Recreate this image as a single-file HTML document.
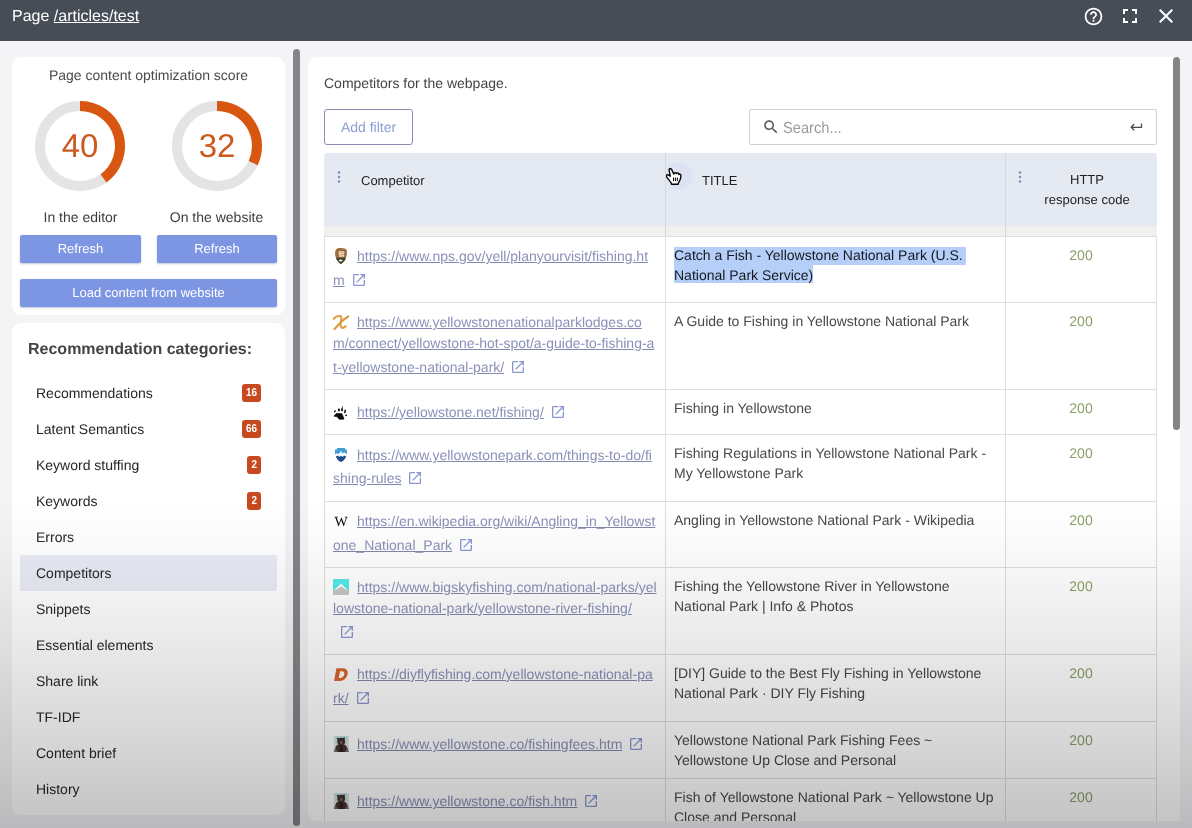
<!DOCTYPE html>
<html>
<head>
<meta charset="utf-8">
<title>Page /articles/test</title>
<style>
*{box-sizing:border-box;margin:0;padding:0}
html,body{width:1192px;height:828px;overflow:hidden}
body{position:relative;background:#f4f4f6;font-family:"Liberation Sans",sans-serif;font-size:14px;color:#333;-webkit-font-smoothing:antialiased}
#wrap{position:absolute;left:0;top:0;width:1192px;height:828px;overflow:hidden;will-change:transform;text-rendering:geometricPrecision}
.abs{position:absolute}
#hdr{position:absolute;left:0;top:0;width:1192px;height:41px;background:#474d57}
#hdr .ttl{position:absolute;left:12px;top:7px;font-size:16px;line-height:20px;color:#fff;white-space:nowrap}
#hdr .ttl u{text-decoration:underline;text-underline-offset:1px}
#hdr svg{position:absolute}
.card{position:absolute;background:#fff;border-radius:9px}
.sb{position:absolute;background:#858588;border-radius:4px}
/* left card 1 */
.c1t{position:absolute;left:0;width:273px;top:9px;text-align:center;font-size:14px;line-height:18px;color:#4a4a4a}
.lbl{position:absolute;width:137px;text-align:center;font-size:14px;line-height:18px;color:#3c3c3c}
.btn{position:absolute;background:#7d96e3;color:#fff;font-size:13px;text-align:center;border-radius:2px;box-shadow:0 1px 2px rgba(80,90,140,.35)}
.num{position:absolute;width:90px;text-align:center;font-size:33px;line-height:36px;color:#cc5a20}
/* left card 2 */
.rc{position:absolute;left:16px;top:17px;font-weight:bold;font-size:16px;line-height:20px;color:#444;white-space:nowrap}
.it{position:absolute;left:8px;width:257px;height:36px;line-height:36px;padding-left:16px;font-size:14px;color:#262626;white-space:nowrap}
.it.sel{background:#e9ebf5;border-radius:2px}
.bd{position:absolute;height:18px;border-radius:3px;background:#c8491f;color:#fff;font-weight:bold;font-size:11.5px;line-height:18px;text-align:center}
.bd span{display:inline-block;transform:scaleX(.86);transform-origin:50% 50%}
/* main */
#main .cap{position:absolute;left:16px;top:17px;font-size:14px;line-height:18px;color:#444;white-space:nowrap}
#addf{position:absolute;left:16px;top:52px;width:89px;height:36px;border:1px solid #8a8cb4;border-radius:3px;color:#8c9cd4;font-size:14px;line-height:34px;text-align:center}
#srch{position:absolute;left:441px;top:52px;width:408px;height:36px;border:1px solid #d2d2d2;border-radius:2px;background:#fff}
#srch .ph{position:absolute;left:33px;top:9px;font-size:16px;line-height:20px;color:#9c9c9c;white-space:nowrap;transform:scaleX(.915);transform-origin:0 50%}
#tbl{position:absolute;left:16px;top:96px;width:833px;height:680px;overflow:hidden}
#th{position:absolute;left:0;top:0;width:833px;height:73px;background:#e5e9f2;border-radius:3px 3px 0 0}
#strip{position:absolute;left:0;top:73px;width:833px;height:11px;background:#f0f0ef}
.hx{position:absolute;font-size:13px;line-height:20px;color:#222;white-space:nowrap}
.vl{position:absolute;top:0;width:1px;background:#dedede}
.row{position:absolute;left:0;width:833px;border-top:1px solid #dedede}
.lk{position:absolute;left:9px;top:9px;width:330px;font-size:14px;line-height:21px;color:#8b91b9;white-space:nowrap}
.lk u{text-decoration:underline;text-decoration-color:#8388ad;text-underline-offset:1px}
.fv{display:inline-block;width:16px;height:16px;margin-right:8px;vertical-align:-3px}
.oi{display:inline-block;width:16px;height:28px;margin-left:6px;vertical-align:middle}
.oi svg{display:block;margin-top:5px}
.tt{position:absolute;left:350px;top:8px;font-size:14px;line-height:20px;color:#484848;white-space:nowrap}
.cd{position:absolute;left:682px;width:150px;top:8px;text-align:center;font-size:14px;line-height:20px;color:#8c9f66}
.hl{position:relative;color:#15181f}
.hb{position:absolute;background:#b5cff8}
#ovl{position:absolute;left:0;top:495px;width:1192px;height:333px;background:linear-gradient(to bottom,rgba(0,0,0,0.0000) 0%,rgba(0,0,0,0.0132) 10%,rgba(0,0,0,0.0314) 20%,rgba(0,0,0,0.0522) 30%,rgba(0,0,0,0.0748) 40%,rgba(0,0,0,0.0988) 50%,rgba(0,0,0,0.1241) 60%,rgba(0,0,0,0.1505) 70%,rgba(0,0,0,0.1778) 80%,rgba(0,0,0,0.2060) 90%,rgba(0,0,0,0.2350) 100%);pointer-events:none}
</style>
</head>
<body>
<div id="wrap">
<div id="hdr">
  <div class="ttl">Page <u>/articles/test</u></div>
  <svg style="left:1083px;top:6px" width="21" height="21" viewBox="0 0 24 24"><path fill="#fff" d="M11 18h2v-2h-2v2zm1-16C6.48 2 2 6.48 2 12s4.48 10 10 10 10-4.48 10-10S17.52 2 12 2zm0 18c-4.41 0-8-3.59-8-8s3.59-8 8-8 8 3.59 8 8-3.59 8-8 8zm0-14c-2.21 0-4 1.79-4 4h2c0-1.1.9-2 2-2s2 .9 2 2c0 2-3 1.75-3 5h2c0-2.250 3-2.500 3-5 0-2.210-1.790-4-4-4z"/></svg>
  <svg style="left:1118px;top:4px" width="24" height="24" viewBox="0 0 24 24"><path fill="#fff" d="M7 14H5v5h5v-2H7v-3zm-2-4h2V7h3V5H5v5zm12 7h-3v2h5v-5h-2v3zM14 5v2h3v3h2V5h-5z"/></svg>
  <svg style="left:1154px;top:4px" width="24" height="24" viewBox="0 0 24 24"><path fill="#fff" d="M19 6.410L17.590 5 12 10.590 6.410 5 5 6.410 10.590 12 5 17.590 6.410 19 12 13.410 17.590 19 19 17.590 13.410 12z"/></svg>
</div>

<!-- left column -->
<div class="card" id="c1" style="left:12px;top:57px;width:273px;height:258px">
  <div class="c1t">Page content optimization score</div>
  <div class="abs" style="left:23px;top:44px"><svg width="90" height="90" viewBox="0 0 90 90"><circle cx="45" cy="45" r="40" fill="none" stroke="#e4e4e4" stroke-width="10"/><path d="M45 5 A40 40 0 0 1 68.51 77.36" fill="none" stroke="#d8560f" stroke-width="10"/></svg></div>
  <div class="abs" style="left:160px;top:44px"><svg width="90" height="90" viewBox="0 0 90 90"><circle cx="45" cy="45" r="40" fill="none" stroke="#e4e4e4" stroke-width="10"/><path d="M45 5 A40 40 0 0 1 81.19 62.03" fill="none" stroke="#d8560f" stroke-width="10"/></svg></div>
  <div class="num" style="left:23px;top:71px">40</div>
  <div class="num" style="left:160px;top:71px">32</div>
  <div class="lbl" style="left:0;top:151px">In the editor</div>
  <div class="lbl" style="left:136px;top:151px">On the website</div>
  <div class="btn" style="left:8px;top:178px;width:121px;height:28px;line-height:27px">Refresh</div>
  <div class="btn" style="left:145px;top:178px;width:120px;height:28px;line-height:27px">Refresh</div>
  <div class="btn" style="left:8px;top:222px;width:257px;height:28px;line-height:28px">Load content from website</div>
</div>
<div class="card" id="c2" style="left:12px;top:323px;width:273px;height:492px">
  <div class="rc">Recommendation categories:</div>
  <div class="it" style="top:52px">Recommendations</div>
  <div class="bd" style="left:230px;top:61px;width:19px"><span>16</span></div>
  <div class="it" style="top:88px">Latent Semantics</div>
  <div class="bd" style="left:230px;top:97px;width:19px"><span>66</span></div>
  <div class="it" style="top:124px">Keyword stuffing</div>
  <div class="bd" style="left:235px;top:133px;width:14px"><span>2</span></div>
  <div class="it" style="top:160px">Keywords</div>
  <div class="bd" style="left:235px;top:169px;width:14px"><span>2</span></div>
  <div class="it" style="top:196px">Errors</div>
  <div class="it sel" style="top:232px">Competitors</div>
  <div class="it" style="top:268px">Snippets</div>
  <div class="it" style="top:304px">Essential elements</div>
  <div class="it" style="top:340px">Share link</div>
  <div class="it" style="top:376px">TF-IDF</div>
  <div class="it" style="top:412px">Content brief</div>
  <div class="it" style="top:448px">History</div>
</div>
<div class="sb" style="left:293px;top:49px;width:7px;height:777px"></div>

<!-- main -->
<div class="card" id="main" style="left:308px;top:57px;width:872px;height:764px;border-radius:9px 0 0 9px;overflow:hidden">
  <div class="cap">Competitors for the webpage.</div>
  <div id="addf">Add filter</div>
  <div id="srch">
    <svg class="abs" style="left:12px;top:8px" width="18" height="18" viewBox="0 0 24 24"><path fill="#555" d="M15.5 14h-.79l-.28-.27C15.41 12.59 16 11.110 16 9.500 16 5.910 13.090 3 9.500 3S3 5.910 3 9.500 5.910 16 9.500 16c1.610 0 3.090-.59 4.230-1.570l.27.28v.79l5 4.990L20.490 19l-4.990-5zm-6 0C7.010 14 5 11.990 5 9.500S7.010 5 9.500 5 14 7.010 14 9.500 11.990 14 9.500 14z"/></svg>
    <div class="ph">Search...</div>
    <svg class="abs" style="left:379px;top:11px" width="14" height="12" viewBox="0 0 14 12"><path d="M12.500 2.600V6.300H2.200M5.200 3.300L2.200 6.300L5.200 9.300" fill="none" stroke="#4a4a4a" stroke-width="1.300"/></svg>
  </div>
  <div id="tbl">
    <div id="th"></div>
    <div id="strip"></div>
    <div class="abs" style="left:341px;top:9px;width:28px;height:28px;border-radius:14px;background:#dde3f2"></div>
    <div class="abs" style="left:13px;top:16.500px"><svg width="4" height="12" viewBox="0 0 4 12"><circle cx="2" cy="1.6" r="1.25" fill="#7f89bc"/><circle cx="2" cy="6" r="1.25" fill="#7f89bc"/><circle cx="2" cy="10.4" r="1.25" fill="#7f89bc"/></svg></div>
    <div class="hx" style="left:37px;top:18px">Competitor</div>
    <div class="hx" style="left:378px;top:18px">TITLE</div>
    <div class="abs" style="left:694px;top:16.500px"><svg width="4" height="12" viewBox="0 0 4 12"><circle cx="2" cy="1.6" r="1.25" fill="#7f89bc"/><circle cx="2" cy="6" r="1.25" fill="#7f89bc"/><circle cx="2" cy="10.4" r="1.25" fill="#7f89bc"/></svg></div>
    <div class="hx" style="left:688px;width:150px;top:17px;text-align:center">HTTP<br>response code</div>
    <div class="vl" style="left:341px;height:84px;background:#d3d7e0"></div>
    <div class="vl" style="left:681px;height:84px;background:#d3d7e0"></div>
    <div class="row" style="top:83px;height:66px"><div class="lk"><svg class="fv" viewBox="0 0 16 16"><path d="M4.200 0.500C6 -0.100 10 -0.100 12.400 0.700C14.200 1.500 14.200 4.800 13.600 7.800C13 11.200 10.400 14.400 7.900 15.900C5.500 14.400 2.900 11.200 2.300 7.800C1.800 4.800 2.200 1.300 4.200 0.500Z" fill="#a26d3c"/><path d="M3.100 10.200C5 9.700 11 9.700 12.900 10.200C12 12.600 10 14.700 7.900 15.900C5.800 14.700 4 12.600 3.100 10.200Z" fill="#39432f"/><path d="M6 3.300h4.800l.8 1.700-1.200.7.900 1.500-.5 1.600H5.900l.5-1.700-.9-.9z" fill="#ecdcc8"/><path d="M7.400 4.600h2.800M6.800 6.600h4" stroke="#b98d62" stroke-width=".7"/><ellipse cx="7.700" cy="12.600" rx="1.900" ry="1" fill="#f3f3ea"/></svg><u>https://www.nps.gov/yell/planyourvisit/fishing.ht</u><br><u>m</u><span class="oi"><svg width="16" height="16" viewBox="0 0 24 24"><path fill="#8a98d2" d="M19 19H5V5h7V3H5c-1.11 0-2 .9-2 2v14c0 1.1.89 2 2 2h14c1.1 0 2-.9 2-2v-7h-2v7zM14 3v2h3.59l-9.83 9.83 1.41 1.41L19 6.41V10h2V3h-7z"/></svg></span></div><div class="tt"><i class="hb" style="left:0;top:2px;width:292px;height:18px"></i><i class="hb" style="left:0;top:20px;width:139px;height:18px"></i><span class="hl">Catch a Fish - Yellowstone National Park (U.S.<br>National Park Service)</span></div><div class="cd">200</div></div>
    <div class="row" style="top:149px;height:87px"><div class="lk"><svg class="fv" viewBox="0 0 16 16"><path d="M0.500 4.800C2 3 5 1.900 7 2C8.700 2.100 8.700 3.600 8.100 6.500C7.500 9.500 7 12 8.200 13.200C9.400 14.200 11.300 13.500 12.500 12.200" fill="none" stroke="#e19a3c" stroke-width="2.100" stroke-linecap="round"/><path d="M15.600 2.200C11 5 5 11 1.600 15" fill="none" stroke="#dc9a44" stroke-width="2" stroke-linecap="round"/></svg><u>https://www.yellowstonenationalparklodges.co</u><br><u>m/connect/yellowstone-hot-spot/a-guide-to-fishing-a</u><br><u>t-yellowstone-national-park/</u><span class="oi"><svg width="16" height="16" viewBox="0 0 24 24"><path fill="#8a98d2" d="M19 19H5V5h7V3H5c-1.11 0-2 .9-2 2v14c0 1.1.89 2 2 2h14c1.1 0 2-.9 2-2v-7h-2v7zM14 3v2h3.59l-9.83 9.83 1.41 1.41L19 6.41V10h2V3h-7z"/></svg></span></div><div class="tt">A Guide to Fishing in Yellowstone National Park</div><div class="cd">200</div></div>
    <div class="row" style="top:236px;height:45px"><div class="lk"><svg class="fv" viewBox="0 0 16 16"><path d="M1.200 11.700L3.300 9.500H8.800L10.900 14.200L10.600 15.300H6.200L4.100 12.800L1.200 12.300Z" fill="#0a0a0a" stroke="#0a0a0a" stroke-width=".6" stroke-linejoin="round"/><ellipse cx="1.900" cy="7.300" rx=".8" ry="1.100" fill="#0a0a0a" transform="rotate(25 1.900 7.300)"/><rect x="5" y="4.600" width="1.800" height="2.700" rx=".6" fill="#0a0a0a"/><rect x="8.100" y="4.200" width="1.800" height="3" rx=".6" fill="#0a0a0a"/><path d="M9.300 4.600L9.500 2.400" stroke="#0a0a0a" stroke-width=".7"/><rect x="11.300" y="5.600" width="1.500" height="3.600" rx=".6" fill="#0a0a0a" transform="rotate(12 12 7.400)"/><ellipse cx="13.100" cy="11.300" rx=".9" ry=".9" fill="#0a0a0a"/></svg><u>https://yellowstone.net/fishing/</u><span class="oi"><svg width="16" height="16" viewBox="0 0 24 24"><path fill="#8a98d2" d="M19 19H5V5h7V3H5c-1.11 0-2 .9-2 2v14c0 1.1.89 2 2 2h14c1.1 0 2-.9 2-2v-7h-2v7zM14 3v2h3.59l-9.83 9.83 1.41 1.41L19 6.41V10h2V3h-7z"/></svg></span></div><div class="tt">Fishing in Yellowstone</div><div class="cd">200</div></div>
    <div class="row" style="top:281px;height:67px"><div class="lk" style="top:10px"><svg class="fv" viewBox="0 0 16 16"><path d="M4 1H12V2.500H14V7.300L11.200 5.200L9.600 6.700L8 4L5.600 7.200L4.600 6.200L2 7.300V2.500H4Z" fill="#3f9fd6"/><path d="M2.800 9.400L5 8.400L6.500 9.900L8 8.400L9.500 9.900L11 8.400L13.200 9.400C12.200 12 10.200 14 8 15C5.800 14 3.800 12 2.800 9.400Z" fill="#1d4d89"/></svg><u>https://www.yellowstonepark.com/things-to-do/fi</u><br><u>shing-rules</u><span class="oi" style="height:26px"><svg style="margin-top:4px" width="16" height="16" viewBox="0 0 24 24"><path fill="#8a98d2" d="M19 19H5V5h7V3H5c-1.11 0-2 .9-2 2v14c0 1.1.89 2 2 2h14c1.1 0 2-.9 2-2v-7h-2v7zM14 3v2h3.59l-9.83 9.83 1.41 1.41L19 6.41V10h2V3h-7z"/></svg></span></div><div class="tt">Fishing Regulations in Yellowstone National Park -<br>My Yellowstone Park</div><div class="cd">200</div></div>
    <div class="row" style="top:348px;height:66px"><div class="lk"><svg class="fv" viewBox="0 0 16 16"><text x="8" y="13" font-family="Liberation Serif,serif" font-size="14" text-anchor="middle" fill="#0c0c0c">W</text></svg><u>https://en.wikipedia.org/wiki/Angling_in_Yellowst</u><br><u>one_National_Park</u><span class="oi"><svg width="16" height="16" viewBox="0 0 24 24"><path fill="#8a98d2" d="M19 19H5V5h7V3H5c-1.11 0-2 .9-2 2v14c0 1.1.89 2 2 2h14c1.1 0 2-.9 2-2v-7h-2v7zM14 3v2h3.59l-9.83 9.83 1.41 1.41L19 6.41V10h2V3h-7z"/></svg></span></div><div class="tt">Angling in Yellowstone National Park - Wikipedia</div><div class="cd">200</div></div>
    <div class="row" style="top:414px;height:87px"><div class="lk"><svg class="fv" viewBox="0 0 16 16"><rect width="16" height="16" fill="#52ebe8"/><path d="M0.500 12L8 4.400L15.500 12Z" fill="#fff"/><path d="M0 11.200L3 10.700L8 7.400L13 10.700L16 11.200V16H0Z" fill="#c9c5c5"/></svg><u>https://www.bigskyfishing.com/national-parks/yel</u><br><u>lowstone-national-park/yellowstone-river-fishing/</u><br><span class="oi"><svg width="16" height="16" viewBox="0 0 24 24"><path fill="#8a98d2" d="M19 19H5V5h7V3H5c-1.11 0-2 .9-2 2v14c0 1.1.89 2 2 2h14c1.1 0 2-.9 2-2v-7h-2v7zM14 3v2h3.59l-9.83 9.83 1.41 1.41L19 6.41V10h2V3h-7z"/></svg></span></div><div class="tt">Fishing the Yellowstone River in Yellowstone<br>National Park | Info &amp; Photos</div><div class="cd">200</div></div>
    <div class="row" style="top:501px;height:67px"><div class="lk"><svg class="fv" viewBox="0 0 16 16"><path d="M3.400 2.300H9.600C13.400 2.300 15.400 4.800 14.600 8.300C13.800 12 10.800 15 6.800 15H1.100ZM7.200 5.300L5.600 12H7C9.200 12 10.700 10.600 11.200 8.500C11.700 6.500 10.800 5.300 8.800 5.300Z" fill="#d8672c"/></svg><u>https://diyflyfishing.com/yellowstone-national-pa</u><br><u>rk/</u><span class="oi"><svg width="16" height="16" viewBox="0 0 24 24"><path fill="#8a98d2" d="M19 19H5V5h7V3H5c-1.11 0-2 .9-2 2v14c0 1.1.89 2 2 2h14c1.1 0 2-.9 2-2v-7h-2v7zM14 3v2h3.59l-9.83 9.83 1.41 1.41L19 6.41V10h2V3h-7z"/></svg></span></div><div class="tt">[DIY] Guide to the Best Fly Fishing in Yellowstone<br>National Park &middot; DIY Fly Fishing</div><div class="cd">200</div></div>
    <div class="row" style="top:568px;height:57px"><div class="lk"><svg class="fv" viewBox="0 0 16 16"><rect x=".8" width="15.200" height="16" fill="#dde7e6"/><rect x="2.200" width="12" height="8" fill="#c2e3e1"/><path d="M1.200 16C1.600 12.600 3 10.200 4.200 8.800L12.200 8.800C13.600 10.200 15 12.600 15.600 16Z" fill="#4a3531"/><path d="M1.200 16C1.400 14.400 1.900 13 2.600 11.800L4.400 16ZM15.600 16C15.300 14.400 14.800 13 14.100 11.800L12.400 16Z" fill="#7b716b"/><ellipse cx="8.200" cy="5.600" rx="3.900" ry="3.900" fill="#45322b"/><circle cx="4.800" cy="2.700" r="1" fill="#1f2a2a"/><circle cx="11" cy="2.400" r="1" fill="#1f2a2a"/><ellipse cx="8.300" cy="6.400" rx="1.200" ry="1.500" fill="#8a6a58"/><path d="M7 9h2.600l.6 7H6.400z" fill="#2d211e"/></svg><u>https://www.yellowstone.co/fishingfees.htm</u><span class="oi"><svg width="16" height="16" viewBox="0 0 24 24"><path fill="#8a98d2" d="M19 19H5V5h7V3H5c-1.11 0-2 .9-2 2v14c0 1.1.89 2 2 2h14c1.1 0 2-.9 2-2v-7h-2v7zM14 3v2h3.59l-9.83 9.83 1.41 1.41L19 6.41V10h2V3h-7z"/></svg></span></div><div class="tt">Yellowstone National Park Fishing Fees ~<br>Yellowstone Up Close and Personal</div><div class="cd">200</div></div>
    <div class="row" style="top:625px;height:60px"><div class="lk"><svg class="fv" viewBox="0 0 16 16"><rect x=".8" width="15.200" height="16" fill="#dde7e6"/><rect x="2.200" width="12" height="8" fill="#c2e3e1"/><path d="M1.200 16C1.600 12.600 3 10.200 4.200 8.800L12.200 8.800C13.600 10.200 15 12.600 15.600 16Z" fill="#4a3531"/><path d="M1.200 16C1.400 14.400 1.900 13 2.600 11.800L4.400 16ZM15.600 16C15.300 14.400 14.800 13 14.100 11.800L12.400 16Z" fill="#7b716b"/><ellipse cx="8.200" cy="5.600" rx="3.900" ry="3.900" fill="#45322b"/><circle cx="4.800" cy="2.700" r="1" fill="#1f2a2a"/><circle cx="11" cy="2.400" r="1" fill="#1f2a2a"/><ellipse cx="8.300" cy="6.400" rx="1.200" ry="1.500" fill="#8a6a58"/><path d="M7 9h2.600l.6 7H6.400z" fill="#2d211e"/></svg><u>https://www.yellowstone.co/fish.htm</u><span class="oi"><svg width="16" height="16" viewBox="0 0 24 24"><path fill="#8a98d2" d="M19 19H5V5h7V3H5c-1.11 0-2 .9-2 2v14c0 1.1.89 2 2 2h14c1.1 0 2-.9 2-2v-7h-2v7zM14 3v2h3.59l-9.83 9.83 1.41 1.41L19 6.41V10h2V3h-7z"/></svg></span></div><div class="tt">Fish of Yellowstone National Park ~ Yellowstone Up<br>Close and Personal</div><div class="cd">200</div></div>
    <div class="vl" style="left:0;top:83px;height:600px"></div>
    <div class="vl" style="left:341px;top:83px;height:600px"></div>
    <div class="vl" style="left:681px;top:83px;height:600px"></div>
    <div class="vl" style="left:832px;top:83px;height:600px"></div>
  </div>
</div>
<div class="sb" style="left:1173px;top:57px;width:7px;height:373px"></div>

<svg class="abs" style="left:666px;top:167.500px" width="16" height="17.500" viewBox="0 0 16 17.500"><path d="M4.350 0.600C3.400 0.600 3 1.300 3.150 2.100L4.300 8.200L2.200 6.900C1.400 6.400 0.500 6.900 0.400 7.800C0.350 8.500 0.700 9 1.200 9.600L5.200 14.800L5.500 16.200L12.200 16.200L12.500 14.800C13.500 13.200 14.500 11.600 14.700 9.600L14.900 7.200C14.900 6 13.400 5.600 12.900 6.600L12.800 5.800C12.500 4.700 10.900 4.600 10.500 5.700L10.400 5.400C10 4.300 8.300 4.300 8 5.400L7.800 6.200L5.700 1.600C5.400 1 5 0.600 4.350 0.600Z" fill="#fff" stroke="#000" stroke-width="1.350" stroke-linejoin="round"/><path d="M7.500 9.600V13.200M9.400 9.600V13.200M11.300 9.600V13.200" stroke="#000" stroke-width="1"/></svg>
<div id="ovl"></div>
</div>
</body>
</html>
